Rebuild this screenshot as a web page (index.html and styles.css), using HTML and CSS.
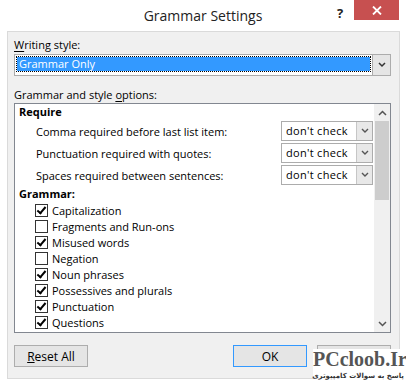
FILE: index.html
```html
<!DOCTYPE html>
<html lang="en">
<head>
    <meta charset="UTF-8">
    <title>Grammar Settings</title>
    <link rel="stylesheet" href="styles.css">
</head>
<body>
<div class="window">
    <div class="titlebar">
        <span class="title">Grammar Settings</span>
        <span class="help">?</span>
        <span class="close">
            <svg width="10" height="9" viewBox="0 0 10 9"><path d="M1 0.5 L9 8.5 M9 0.5 L1 8.5" stroke="#fff" stroke-width="1.8"/></svg>
        </span>
    </div>

    <div class="client">
        <div class="label"><u>W</u>riting style:</div>
        <div class="combo">
            <div class="combo-value"><span class="focus">Grammar Only</span></div>
            <div class="combo-arrow">
                <svg width="8" height="6" viewBox="0 0 8 6"><path d="M1 1 L4 4 L7 1" fill="none" stroke="#333" stroke-width="1.5"/></svg>
            </div>
        </div>

        <div class="label options-label">Grammar and style <u>o</u>ptions:</div>
        <div class="listbox">
            <div class="list-items">
                <div class="heading">Require</div>
                <div class="req-row">
                    <span>Comma required before last list item:</span>
                    <div class="mini-select"><span class="value">don't check</span><span class="arrow"><svg width="8" height="6" viewBox="0 0 8 6"><path d="M1 1 L4 4 L7 1" fill="none" stroke="#555" stroke-width="1.4"/></svg></span></div>
                </div>
                <div class="req-row">
                    <span>Punctuation required with quotes:</span>
                    <div class="mini-select"><span class="value">don't check</span><span class="arrow"><svg width="8" height="6" viewBox="0 0 8 6"><path d="M1 1 L4 4 L7 1" fill="none" stroke="#555" stroke-width="1.4"/></svg></span></div>
                </div>
                <div class="req-row">
                    <span>Spaces required between sentences:</span>
                    <div class="mini-select"><span class="value">don't check</span><span class="arrow"><svg width="8" height="6" viewBox="0 0 8 6"><path d="M1 1 L4 4 L7 1" fill="none" stroke="#555" stroke-width="1.4"/></svg></span></div>
                </div>
                <div class="heading">Grammar:</div>
                <div class="check-row"><span class="box checked"></span>Capitalization</div>
                <div class="check-row"><span class="box"></span>Fragments and Run-ons</div>
                <div class="check-row"><span class="box checked"></span>Misused words</div>
                <div class="check-row"><span class="box"></span>Negation</div>
                <div class="check-row"><span class="box checked"></span>Noun phrases</div>
                <div class="check-row"><span class="box checked"></span>Possessives and plurals</div>
                <div class="check-row"><span class="box checked"></span>Punctuation</div>
                <div class="check-row"><span class="box checked"></span>Questions</div>
                <div class="check-row"><span class="box checked"></span></div>
            </div>
            <div class="scrollbar">
                <div class="sb-btn">
                    <svg width="9" height="6" viewBox="0 0 9 6"><path d="M1 5 L4.5 1.5 L8 5" fill="none" stroke="#555" stroke-width="1.5"/></svg>
                </div>
                <div class="sb-track"><div class="sb-thumb"></div></div>
                <div class="sb-btn">
                    <svg width="9" height="6" viewBox="0 0 9 6"><path d="M1 1 L4.5 4.5 L8 1" fill="none" stroke="#555" stroke-width="1.5"/></svg>
                </div>
            </div>
        </div>

        <div class="buttons">
            <button class="btn"><u>R</u>eset All</button>
            <div class="spacer"></div>
            <button class="btn default">OK</button>
            <button class="btn"></button>
        </div>
    </div>

    <div class="watermark">
        <div class="wm-name">PCcloob.Ir</div>
        <div class="wm-sub">پاسخ به سوالات کامپیوتری</div>
    </div>
</div>
</body>
</html>
```

FILE: styles.css
```css
/* General */
body {
    margin: 0;
    background: #ffffff;
    font-family: 'Open Sans', 'Noto Sans', sans-serif;
    font-size: 11px;
    color: #000;
}

.window {
    position: relative;
    width: 406px;
    height: 383px;
    overflow: hidden;
    background: #ffffff;
}

/* Title bar */
.titlebar {
    position: relative;
    height: 31px;
}

.title {
    display: block;
    text-align: center;
    font-size: 14px;
    line-height: 31px;
    color: #222;
}

.help {
    position: absolute;
    left: 337px;
    top: 4px;
    font-weight: bold;
    font-size: 13px;
    color: #222;
}

.close {
    position: absolute;
    left: 354px;
    top: 0;
    width: 45px;
    height: 20px;
    background: #c75050;
    display: flex;
    align-items: center;
    justify-content: center;
}

/* Client area */
.client {
    box-sizing: border-box;
    margin-left: 7px;
    width: 393px;
    height: 348px;
    border: 1px solid #dadada;
    background: #f0f0f0;
    padding: 5px 8px 0 6px;
}

.label {
    line-height: 16px;
    color: #000;
}

.label u {
    text-decoration-thickness: 1px;
    text-underline-offset: 2px;
}

.options-label {
    margin-top: 11px;
}

/* Writing style combo */
.combo {
    display: flex;
    height: 22px;
    margin-top: 1px;
    border: 1px solid #acacac;
    box-sizing: border-box;
    background: #fff;
}

.combo-value {
    flex: 1;
    padding: 2px;
}

.focus {
    display: block;
    height: 14px;
    background: #3399ff;
    color: #fff;
    outline: 1px dotted #000;
    line-height: 14px;
    padding-left: 2px;
}

.combo-arrow {
    width: 17px;
    background: #e5e5e5;
    border-left: 1px solid #acacac;
    display: flex;
    align-items: center;
    justify-content: center;
}

/* List box */
.listbox {
    display: flex;
    height: 230px;
    box-sizing: border-box;
    border: 1px solid #828790;
    background: #fff;
    overflow: hidden;
}

.list-items {
    flex: 1;
    overflow: hidden;
}

.heading {
    font-weight: bold;
    line-height: 16px;
    padding-left: 4px;
}

.req-row {
    display: flex;
    align-items: center;
    justify-content: space-between;
    height: 22px;
    padding-left: 21px;
    padding-right: 1px;
}

.mini-select {
    display: flex;
    width: 92px;
    height: 20px;
    box-sizing: border-box;
    border: 1px solid #acacac;
    background: #fff;
}

.mini-select .value {
    flex: 1;
    line-height: 18px;
    padding-left: 4px;
    font-size: 11px;
    letter-spacing: 0.3px;
}

.mini-select .arrow {
    width: 15px;
    background: #e8e8e8;
    border-left: 1px solid #c6c6c6;
    display: flex;
    align-items: center;
    justify-content: center;
}

.check-row {
    display: flex;
    align-items: center;
    height: 16px;
    padding-left: 20px;
}

.box {
    width: 13px;
    height: 13px;
    box-sizing: border-box;
    border: 1px solid #333;
    background: #fff;
    margin-right: 4px;
    position: relative;
    flex-shrink: 0;
}

.box.checked::after {
    content: "";
    position: absolute;
    left: 3px;
    top: 0px;
    width: 3px;
    height: 7px;
    border: solid #000;
    border-width: 0 2px 2px 0;
    transform: rotate(40deg);
}

/* Scrollbar */
.scrollbar {
    width: 16px;
    display: flex;
    flex-direction: column;
    background: #f0f0f0;
}

.sb-btn {
    height: 17px;
    display: flex;
    align-items: center;
    justify-content: center;
}

.sb-track {
    flex: 1;
}

.sb-thumb {
    margin: 0 1px;
    height: 79px;
    background: #cdcdcd;
}

/* Buttons */
.buttons {
    display: flex;
    margin-top: 12px;
    gap: 10px;
}

.spacer {
    flex: 1;
}

.btn {
    width: 74px;
    height: 22px;
    border: 1px solid #adadad;
    background: #e5e5e5;
    font-family: inherit;
    font-size: 12px;
    color: #000;
    padding: 0;
}

.btn.default {
    border-color: #3399ff;
}

/* Watermark overlay */
.watermark {
    position: absolute;
    left: 313px;
    top: 349px;
    width: 93px;
    height: 34px;
    background: #fff;
    text-align: center;
    white-space: nowrap;
}

.wm-name {
    font-family: 'Liberation Serif', serif;
    font-weight: bold;
    font-size: 20px;
    line-height: 21px;
    color: #555;
}

.wm-sub {
    font-family: 'DejaVu Sans', sans-serif;
    font-weight: bold;
    font-size: 7px;
    line-height: 12px;
    color: #333;
    direction: rtl;
    text-align: right;
    padding-right: 2px;
}
```
